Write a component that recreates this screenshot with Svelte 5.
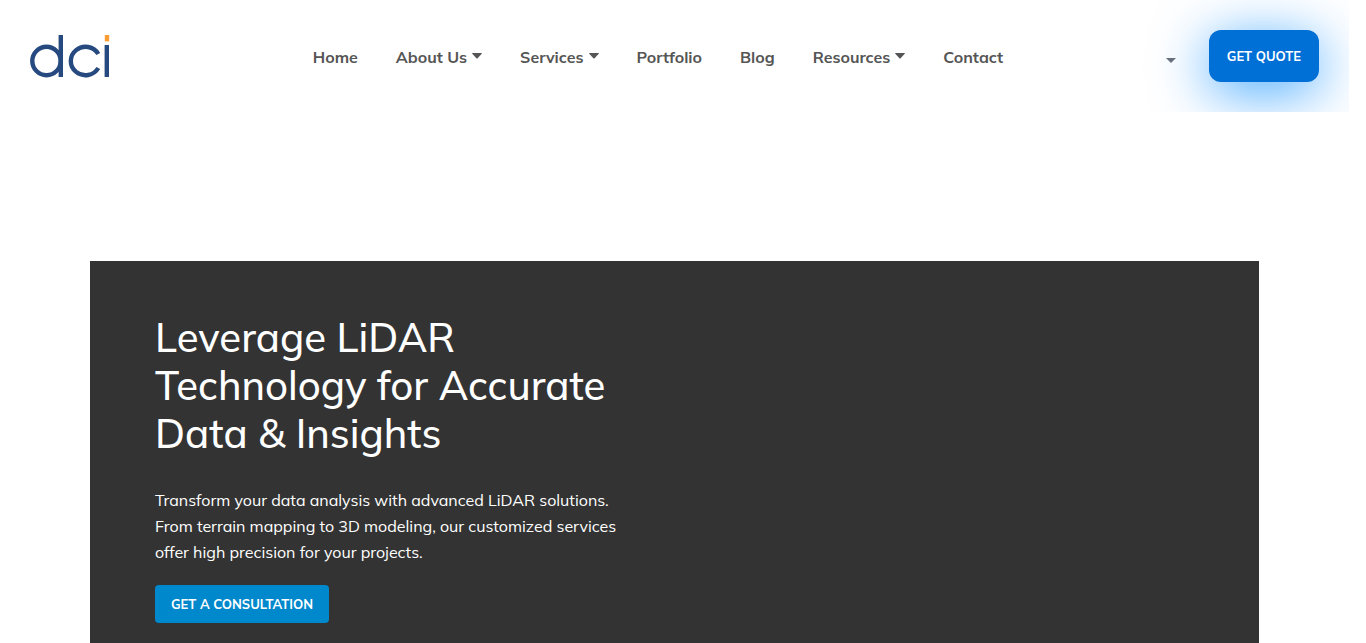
<script>
  const links = [
    { label: 'Home' },
    { label: 'About Us', menu: true },
    { label: 'Services', menu: true },
    { label: 'Portfolio' },
    { label: 'Blog' },
    { label: 'Resources', menu: true },
    { label: 'Contact' }
  ];
</script>

<div class="page">
  <header>
    <a class="logo" href="#home" aria-label="dci">
      <svg width="80" height="44" viewBox="0 0 80 44" fill="none" aria-hidden="true">
        <g stroke="#26497f" stroke-width="4.4">
          <circle cx="16.5" cy="27" r="14.2" />
          <path d="M30.8 1V43M68.3 20A14.7 14.2 0 1 0 68.3 34M76.8 11V43" />
        </g>
        <path fill="#fb9d32" d="M74.8 1h4.4v6.4h-4.4z" />
      </svg>
    </a>

    <nav aria-label="Main">
      {#each links as link}
        <a href="#{link.label}">
          {link.label}
          {#if link.menu}
            <svg class="caret" width="10" height="6" viewBox="0 0 10 6" aria-hidden="true"><path d="M0.6 0h8.8q.9 0 .3.8L5.6 5.2q-.6.6-1.2 0L.3.8Q-.3 0 .6 0z" /></svg>
          {/if}
        </a>
      {/each}
    </nav>

    <div class="actions">
      <button class="language" aria-label="Language">
        <svg width="10" height="5" viewBox="0 0 10 5" aria-hidden="true"><path d="M0 0h10L5 5z" /></svg>
      </button>
      <a class="quote" href="#quote">GET QUOTE</a>
    </div>
  </header>

  <main>
    <section class="hero">
      <h1>Leverage LiDAR<br />Technology for Accurate<br />Data &amp; Insights</h1>
      <p>
        Transform your data analysis with advanced LiDAR solutions.<br />
        From terrain mapping to 3D modeling, our customized services<br />
        offer high precision for your projects.
      </p>
      <a class="consult" href="#consultation">GET A CONSULTATION</a>
    </section>
  </main>
</div>

<style>
  :global(body) {
    margin: 0;
    background: #fff;
  }

  .page {
    box-sizing: border-box;
    min-height: 100vh;
    display: flex;
    flex-direction: column;
    padding-right: 17px;
    font-family: Mulish, Nunito, "Open Sans", sans-serif;
  }

  a {
    color: inherit;
    text-decoration: none;
  }

  header {
    display: flex;
    align-items: center;
    justify-content: space-between;
    padding: 30px;
    overflow: hidden;
  }

  .logo,
  .logo svg {
    display: block;
  }

  .logo {
    flex: 0 0 120px;
  }

  nav {
    display: flex;
    gap: 38px;
    padding-top: 2px;
    color: #555;
    font-size: 16px;
    font-weight: 700;
    line-height: 24px;
  }

  nav a {
    display: flex;
    align-items: center;
    gap: 5px;
    white-space: nowrap;
  }

  .caret {
    margin-bottom: 2px;
    fill: #555;
  }

  .actions {
    display: flex;
    align-items: center;
    gap: 33px;
  }

  .language {
    display: block;
    padding: 8px 0 0;
    border: 0;
    background: none;
    line-height: 0;
  }

  .language svg {
    display: block;
    fill: #6c7079;
  }

  .quote {
    padding: 16px 18px;
    border-radius: 12px;
    background: #0070d6;
    box-shadow: 0 10px 55px rgb(0 136 255 / 75%);
    color: #fff;
    font-size: 13px;
    font-weight: 700;
    line-height: 20px;
  }

  main {
    flex: 1;
    display: flex;
    padding: 149px 90px 0;
  }

  .hero {
    flex: 1;
    padding: 52px 65px 20px;
    background: #333;
    color: #fff;
  }

  h1 {
    margin: 0 0 30px;
    font-size: 40px;
    font-weight: 500;
    line-height: 48px;
  }

  p {
    margin: 0 0 20px;
    font-size: 16px;
    line-height: 26px;
  }

  .consult {
    display: inline-block;
    padding: 9px 16px;
    border-radius: 4px;
    background: #0088cc;
    font-size: 13px;
    font-weight: 700;
    line-height: 20px;
  }
</style>
